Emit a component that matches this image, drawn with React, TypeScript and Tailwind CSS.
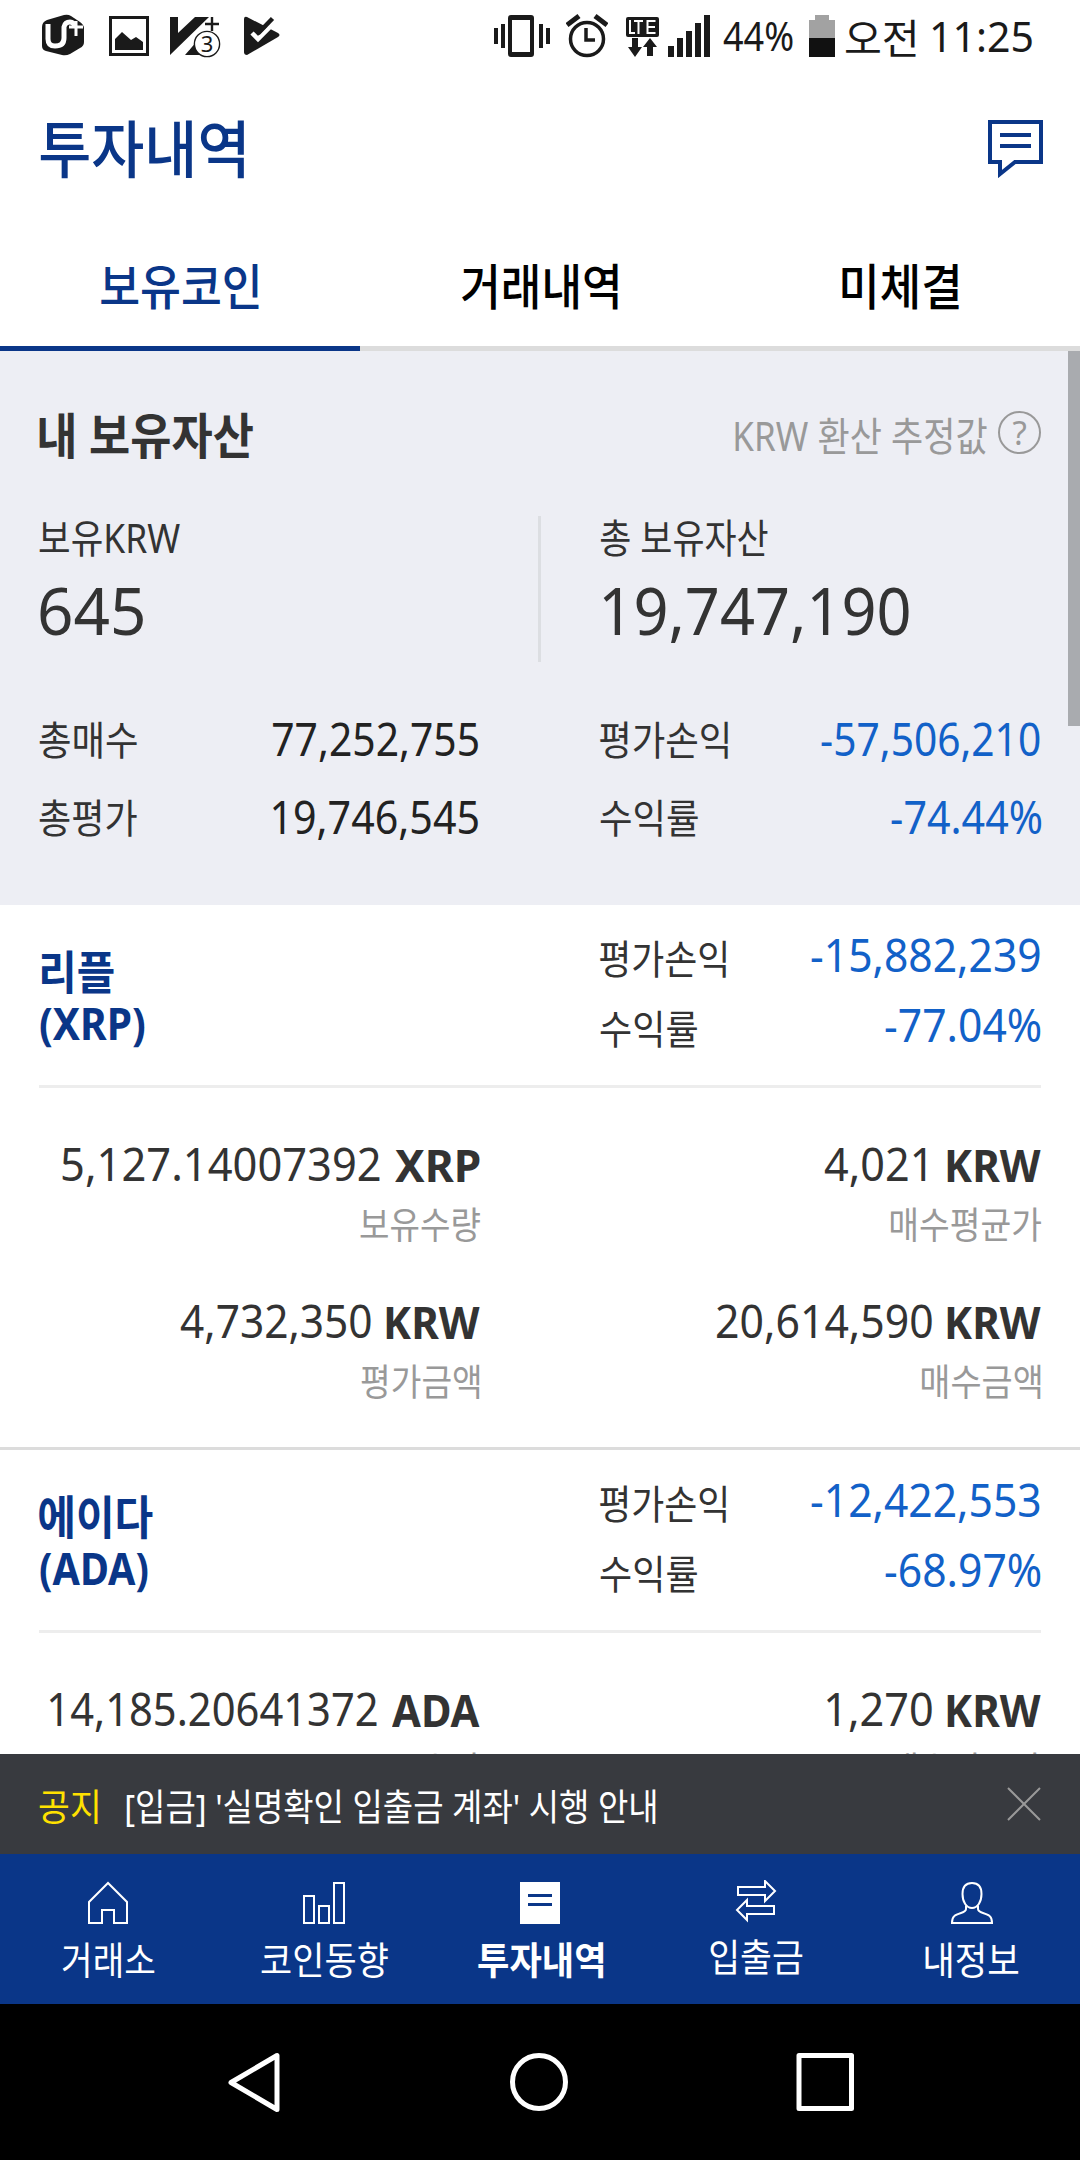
import { useLayoutEffect, useRef } from 'react'
import type { ReactNode } from 'react'

/** One line of text condensed or stretched so that its ink fills the width of its box. */
function Fit({ children, className = '' }: { children: string; className?: string }) {
  const box = useRef<HTMLSpanElement>(null)
  const ink = useRef<HTMLSpanElement>(null)
  useLayoutEffect(() => {
    const b = box.current
    const t = ink.current
    const ctx = document.createElement('canvas').getContext('2d')
    if (!b || !t || !ctx) return
    const cs = getComputedStyle(t)
    ctx.font = `${cs.fontWeight} ${cs.fontSize} ${cs.fontFamily}`
    const m = ctx.measureText(children)
    const scale = b.clientWidth / (m.actualBoundingBoxLeft + m.actualBoundingBoxRight)
    t.style.transform = `translateX(${m.actualBoundingBoxLeft * scale}px) scaleX(${scale})`
  }, [children])
  return (
    <span ref={box} className={`block shrink-0 leading-none whitespace-pre ${className}`}>
      <span ref={ink} className="inline-block origin-left">{children}</span>
    </span>
  )
}

function StatusBar() {
  return (
    <div className="flex h-[72px] items-start pt-[14px] pl-[42px] text-[#1a1a1a]">
      <svg className="shrink-0" width="42" height="44" viewBox="0 0 42 44">
        <path d="M5 6 22 1q4-1 7 1l9 6q4 3 4 6v14q0 4-4 6l-10 6q-4 2-8 1L4 37q-4-1-4-5V13q0-5 5-7Z" fill="#1a1a1a" />
        <path d="M6 10v15q0 7 7 7 9 0 9-8V13q1-5 6-5 4 0 5 5" fill="none" stroke="#fff" strokeWidth="5" />
        <path d="M34 7v15M27 13h14" stroke="#fff" strokeWidth="3" />
      </svg>
      <svg className="ml-[25px] shrink-0" width="40" height="44" viewBox="0 0 40 44">
        <path d="M1.5 3.5h37v37h-37Z" fill="none" stroke="#1a1a1a" strokeWidth="3" />
        <path d="M6 36V25l7-7 9 8 5-3 7 5v8Z" fill="#1a1a1a" />
      </svg>
      <svg className="ml-[21px] shrink-0" width="51" height="46" viewBox="0 0 51 46">
        <path d="M0 3h8v16L25 3h14L0 41ZM15 41l20-23v23Z" fill="#1a1a1a" />
        <path d="m18 28 8-2-7 10Z" fill="#fff" />
        <path d="M42 3v14M35 10h14" stroke="#1a1a1a" strokeWidth="2.4" />
        <circle cx="37" cy="30" r="12.6" fill="#fff" stroke="#1a1a1a" strokeWidth="1.4" />
        <text x="37" y="37.5" textAnchor="middle" fontSize="22" fontFamily="Noto Sans, sans-serif" fill="#1a1a1a">3</text>
      </svg>
      <svg className="ml-[23px] shrink-0" width="38" height="44" viewBox="0 0 38 44">
        <path d="M0 5q0-3 3-2l31 16q3 2 0 4L3 41q-3 0-3-3Z" fill="#1a1a1a" />
        <path d="m8 19 6 6L31 8" fill="none" stroke="#fff" strokeWidth="4.500" />
        <path d="M14 19.500 28.500 4.500" fill="none" stroke="#1a1a1a" strokeWidth="4.500" />
      </svg>
      <svg className="ml-[212px] shrink-0" width="56" height="44" viewBox="0 0 56 44">
        <path d="M2 14v16M9 10v24M47 10v24M54 14v16" stroke="#1a1a1a" strokeWidth="4" />
        <path d="M17 1h20q3 0 3 3v36q0 3-3 3H17q-3 0-3-3V4q0-3 3-3Zm1 5v32h18V6Z" fill="#1a1a1a" fillRule="evenodd" />
      </svg>
      <svg className="ml-[16px] shrink-0" width="42" height="44" viewBox="0 0 42 44">
        <circle cx="21" cy="25" r="16.500" fill="none" stroke="#1a1a1a" strokeWidth="3.500" />
        <path d="M20 14v12h9" fill="none" stroke="#1a1a1a" strokeWidth="3.500" />
        <path d="m1 11 12-9M29 2l12 9" stroke="#1a1a1a" strokeWidth="5" />
      </svg>
      <svg className="ml-[18px] shrink-0" width="34" height="44" viewBox="0 0 34 44">
        <rect y="3" width="33" height="20" rx="2" fill="#1a1a1a" />
        <path d="M4 6v13h5M8 7h9M12.500 7v13M29.500 7h-8v12h8M21 13h8" fill="none" stroke="#fff" strokeWidth="2" />
        <path d="M6 24h6v9h4L9 43 2 33h4ZM24 24l7 9h-4v9h-6v-9h-4Z" fill="#1a1a1a" />
      </svg>
      <svg className="ml-[8px] shrink-0" width="43" height="44" viewBox="0 0 43 44">
        <path d="M0 32h6v11H0zM9 24h6v19H9zM18 17h6v26h-6zM27 9h6v34h-6zM36 1h6v42h-6z" fill="#1a1a1a" />
      </svg>
      <Fit className="mt-[2px] ml-[12px] w-[70px] text-[40px]">44%</Fit>
      <svg className="ml-[16px] shrink-0" width="26" height="44" viewBox="0 0 26 44">
        <path d="M6 1h14v5h6v18H0V6h6Z" fill="#a2a2a2" />
        <path d="M0 24h26v19H0z" fill="#111" />
      </svg>
      <Fit className="mt-[4px] ml-[11px] w-[70px] text-[41px]">오전</Fit>
      <Fit className="mt-[1px] ml-[16px] w-[100px] text-[42px]">11:25</Fit>
    </div>
  )
}

function Header() {
  return (
    <header className="flex h-[154px] items-start justify-between pr-[37px] pl-[40px]">
      <Fit className="mt-[46px] w-[204px] text-[62px] font-medium text-[#0a3688]">투자내역</Fit>
      <svg className="mt-[48px]" width="55" height="58" viewBox="0 0 55 58" fill="none" stroke="#0a3688" strokeWidth="4">
        <path d="M2 2h51v40H27L12 54V42H2Z" />
        <path d="M12 15h31M12 26h31" />
      </svg>
    </header>
  )
}

function Tabs() {
  return (
    <nav className="grid h-[125px] grid-cols-3 text-[49px] font-medium text-black">
      <div className="flex justify-center border-b-[5px] border-[#0a3688] pt-[36px] text-[#0a3688]">
        <Fit className="w-[158px]">보유코인</Fit>
      </div>
      <div className="flex justify-center border-b-[5px] border-[#dcdcdc] pt-[36px]">
        <Fit className="w-[156px]">거래내역</Fit>
      </div>
      <div className="flex justify-center border-b-[5px] border-[#dcdcdc] pt-[36px]">
        <Fit className="w-[117px]">미체결</Fit>
      </div>
    </nav>
  )
}

function Summary() {
  return (
    <section className="relative h-[554px] shrink-0 bg-[#edeef4] pr-[39px] pl-[39px] text-[#333]">
      <div className="flex items-center pt-[60px]">
        <Fit className="w-[214px] text-[49px] font-bold">내 보유자산</Fit>
        <Fit className="ml-auto w-[252px] text-[40px] text-[#999]">KRW 환산 추정값</Fit>
        <span className="-mt-[7px] ml-[11px] flex size-[43px] items-center justify-center rounded-full border-2 border-[#999] text-[#999]">
          <Fit className="w-[14px] text-[33px]">?</Fit>
        </span>
      </div>
      <div className="mt-[56px] flex h-[146px] items-start">
        <div className="w-[499px] pt-[2px]">
          <Fit className="w-[141px] text-[40px]">보유KRW</Fit>
          <Fit className="mt-[18px] ml-[1px] w-[103px] text-[66px]">645</Fit>
        </div>
        <div className="h-[146px] w-[3px] bg-[#dcdee2]" />
        <div className="ml-[59px] pt-[2px]">
          <Fit className="w-[168px] text-[40px]">총 보유자산</Fit>
          <Fit className="mt-[18px] ml-[3px] w-[306px] text-[66px]">19,747,190</Fit>
        </div>
      </div>
      <div className="mt-[48px] grid grid-cols-[439px_441px] justify-between gap-y-[18px]">
        <div className="flex h-[60px] items-center justify-between">
          <Fit className="w-[98px] text-[40px]">총매수</Fit>
          <Fit className="-mt-[4px] w-[205px] text-[46px] text-[#222]">77,252,755</Fit>
        </div>
        <div className="flex h-[60px] items-center justify-between">
          <Fit className="w-[128px] text-[40px]">평가손익</Fit>
          <Fit className="-mt-[4px] mr-[1px] w-[219px] text-[46px] text-[#1261c8]">-57,506,210</Fit>
        </div>
        <div className="flex h-[60px] items-center justify-between">
          <Fit className="w-[98px] text-[40px]">총평가</Fit>
          <Fit className="-mt-[4px] w-[205px] text-[46px] text-[#222]">19,746,545</Fit>
        </div>
        <div className="flex h-[60px] items-center justify-between">
          <Fit className="w-[98px] text-[40px]">수익률</Fit>
          <Fit className="-mt-[4px] w-[150px] text-[46px] text-[#1261c8]">-74.44%</Fit>
        </div>
      </div>
      <div className="absolute top-0 right-0 h-[375px] w-[12px] bg-[#a9abaf]" />
    </section>
  )
}

type Cell = { value: string; unit: string; label: string; vw: string; uw: string; lw: string }
type Coin = { name: string; code: string; nw: string; cw: string; profit: string; rate: string; cells: Cell[] }

const coins: Coin[] = [
  {
    name: '리플', code: '(XRP)', nw: 'ml-[3px] w-[72px]', cw: 'w-[105px]',
    profit: '-15,882,239', rate: '-77.04%',
    cells: [
      { value: '5,127.14007392', unit: 'XRP', label: '보유수량', vw: 'w-[318px]', uw: 'w-[85px]', lw: 'w-[120px]' },
      { value: '4,021', unit: 'KRW', label: '매수평균가', vw: 'w-[101px] mr-[7px]', uw: 'w-[94px]', lw: 'w-[150px]' },
      { value: '4,732,350', unit: 'KRW', label: '평가금액', vw: 'w-[191px]', uw: 'w-[94px]', lw: 'w-[119px]' },
      { value: '20,614,590', unit: 'KRW', label: '매수금액', vw: 'w-[215px]', uw: 'w-[94px]', lw: 'w-[119px]' },
    ],
  },
  {
    name: '에이다', code: '(ADA)', nw: 'w-[114px]', cw: 'w-[108px]',
    profit: '-12,422,553', rate: '-68.97%',
    cells: [
      { value: '14,185.20641372', unit: 'ADA', label: '보유수량', vw: 'w-[327px]', uw: 'w-[88px]', lw: 'w-[120px]' },
      { value: '1,270', unit: 'KRW', label: '매수평균가', vw: 'w-[105px]', uw: 'w-[94px]', lw: 'w-[150px]' },
    ],
  },
]

function CoinCard({ coin }: { coin: Coin }) {
  return (
    <section className="h-[545px] shrink-0 border-b-[3px] border-[#dcdcdc] px-[39px] text-[#333]">
      <div className="flex h-[183px] border-b-[3px] border-[#ededed]">
        <div className="w-[561px] pt-[43px] font-bold text-[#0a3688]">
          <Fit className={`text-[46px] ${coin.nw}`}>{coin.name}</Fit>
          <Fit className={`mt-[7px] ml-[1px] text-[44px] ${coin.cw}`}>{coin.code}</Fit>
        </div>
        <div className="flex-1 pt-[15px]">
          <div className="flex h-[70px] items-center justify-between">
            <Fit className="mt-[8px] w-[126px] text-[40px]">평가손익</Fit>
            <Fit className="-mt-[2px] mr-[1px] w-[229px] text-[45px] text-[#1261c8]">{coin.profit}</Fit>
          </div>
          <div className="flex h-[70px] items-center justify-between">
            <Fit className="mt-[8px] w-[97px] text-[40px]">수익률</Fit>
            <Fit className="-mt-[2px] w-[156px] text-[45px] text-[#1261c8]">{coin.rate}</Fit>
          </div>
        </div>
      </div>
      <div className="grid grid-cols-[441px_441px] justify-between gap-y-[33px] pt-[50px]">
        {coin.cells.map((c) => (
          <div key={c.label} className="h-[124px]">
            <div className="flex h-[50px] items-center justify-end">
              <Fit className={`text-[45px] ${c.vw}`}>{c.value}</Fit>
              <Fit className={`mt-[3px] ml-[15px] text-[44px] font-bold ${c.uw}`}>{c.unit}</Fit>
            </div>
            <Fit className={`mt-[18px] ml-auto text-[37px] text-[#999] ${c.lw}`}>{c.label}</Fit>
          </div>
        ))}
      </div>
    </section>
  )
}

function Notice() {
  return (
    <div className="flex h-[100px] items-center bg-[#383a3f] pr-[39px] pl-[39px] text-[37px] text-white">
      <Fit className="mt-[4px] w-[59px] text-[#ffe100]">공지</Fit>
      <Fit className="mt-[4px] ml-[28px] w-[530px]">[입금] '실명확인 입출금 계좌' 시행 안내</Fit>
      <svg className="ml-auto" width="34" height="34" viewBox="0 0 34 34" stroke="#999" strokeWidth="2">
        <path d="m1 1 32 32M33 1 1 33" />
      </svg>
    </div>
  )
}

function NavItem({ icon, label, className }: { icon: ReactNode; label: string; className: string }) {
  return (
    <div className="flex flex-col items-center pt-[26px]">
      <svg width="44" height="46" viewBox="0 0 44 46" fill="none" stroke="#fff" strokeWidth="2">{icon}</svg>
      <Fit className={`text-[38px] ${className}`}>{label}</Fit>
    </div>
  )
}

function BottomNav() {
  return (
    <nav className="grid h-[150px] grid-cols-5 bg-[#0a3688] text-white">
      <NavItem label="거래소" className="mt-[14px] w-[93px]" icon={<path d="M3 22 22 3l19 19v21H28V30H16v13H3Z" />} />
      <NavItem label="코인동향" className="mt-[14px] w-[127px]" icon={<path d="M2 16h10v27H2ZM17 26h10v17H17ZM32 3h10v40H32Z" />} />
      <NavItem
        label="투자내역"
        className="mt-[14px] w-[125px] font-bold"
        icon={
          <>
            <path d="M2 2h40v42H2Z" fill="#fff" stroke="none" />
            <path d="M10 15.500h24M10 24.500h24" stroke="#0a3688" strokeWidth="3" />
          </>
        }
      />
      <NavItem
        label="입출금"
        className="mt-[11px] w-[93px]"
        icon={<path d="M4 7h27V1l10 10-10 10v-6H4ZM40 26H13v-6L3 30l10 10v-6h27Z" />}
      />
      <NavItem
        label="내정보"
        className="mt-[14px] w-[94px]"
        icon={
          <>
            <path d="M22 3c-7 0-9.500 5-9.500 11 0 8 4 14 9.500 14s9.500-6 9.500-14c0-6-2.500-11-9.500-11Z" />
            <path d="M16 25.500V29c0 2-2 3-5 4-6 2-9 3-9 10h40c0-7-3-8-9-10-3-1-5-2-5-4v-3.500" />
          </>
        }
      />
    </nav>
  )
}

function SystemNav() {
  return (
    <div className="flex h-[156px] items-start bg-black pt-[48px]">
      <svg className="ml-[228px]" width="53" height="60" viewBox="0 0 53 60" fill="none" stroke="#fff" strokeWidth="5" strokeLinejoin="round">
        <path d="M3 30.500 49 3.500v54Z" />
      </svg>
      <svg className="ml-[228px]" width="60" height="60" viewBox="0 0 60 60" fill="none" stroke="#fff" strokeWidth="5">
        <circle cx="30" cy="30" r="26.500" />
      </svg>
      <svg className="ml-[226px]" width="60" height="60" viewBox="0 0 60 60" fill="none" stroke="#fff" strokeWidth="5" strokeLinejoin="round">
        <path d="M4 3.500h52.500v53H4Z" />
      </svg>
    </div>
  )
}

export default function App() {
  return (
    <div className="flex h-[2160px] w-[1080px] flex-col overflow-hidden bg-white font-['Noto_Sans','Noto_Sans_CJK_KR',sans-serif]">
      <StatusBar />
      <Header />
      <Tabs />
      <main className="flex h-[1403px] flex-col overflow-hidden">
        <Summary />
        {coins.map((c) => (
          <CoinCard key={c.code} coin={c} />
        ))}
      </main>
      <Notice />
      <BottomNav />
      <SystemNav />
    </div>
  )
}
